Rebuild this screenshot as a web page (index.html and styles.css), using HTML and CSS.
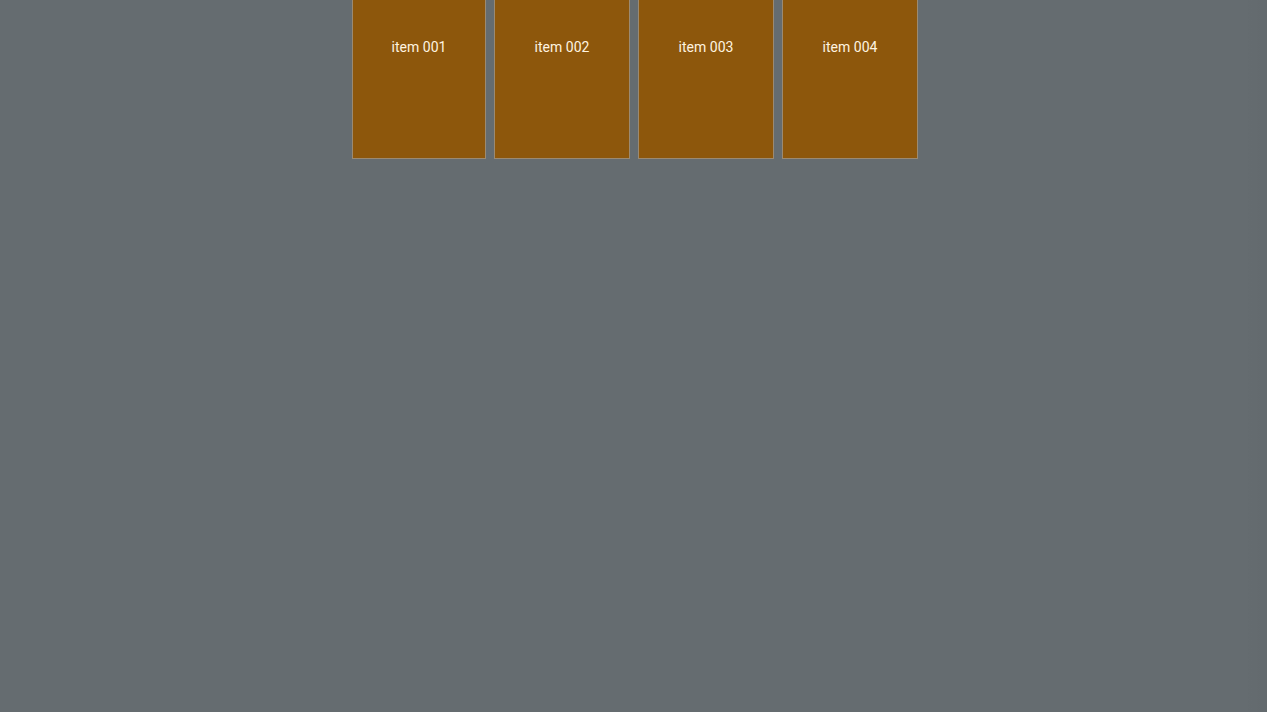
FILE: index.html
```html
<!DOCTYPE html>
<html>
<head>
<meta charset="utf-8">
<link rel="stylesheet" href="styles.css">
</head>
<body>
<div class="page">
  <div class="row">
    <div class="item item-first">item 001</div>
    <div class="item">item 002</div>
    <div class="item">item 003</div>
    <div class="item">item 004</div>
  </div>
</div>
</body>
</html>
```
FILE: styles.css
```css
html, body {
  margin: 0;
  padding: 0;
  height: 100%;
}
body {
  background: #656c70;
  font-family: Roboto, "Liberation Sans", sans-serif;
  overflow: hidden;
}
.page {
  height: 100%;
  padding-left: 352px;
  box-sizing: border-box;
  background: linear-gradient(to right, rgba(0,0,0,0) calc(100% - 24px), rgba(0,0,0,0.025) 100%);
}
.row {
  display: flex;
  gap: 8px;
  align-items: flex-start;
}
.item {
  width: 136px;
  height: 159px;
  box-sizing: border-box;
  background: #8d570c;
  border: 1px solid #9b8a72;
  border-top: none;
  color: #fff4e0;
  font-size: 14px;
  line-height: 16px;
  text-align: center;
  padding-top: 39px;
}
.item-first {
  width: 134px;
}
```
